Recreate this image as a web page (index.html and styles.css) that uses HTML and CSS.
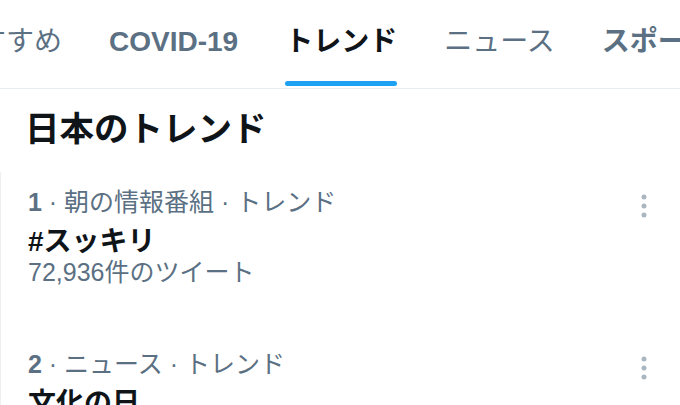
FILE: index.html
```html
<!DOCTYPE html>
<html lang="ja">
<head>
<meta charset="utf-8">
<title>トレンド</title>
<link rel="stylesheet" href="styles.css">
</head>
<body>
<div class="page">
  <nav class="tabs">
    <div class="tab-track">
      <a class="tab tab-light"><span class="tab-label">おすすめ</span><span class="tab-bar"></span></a>
      <a class="tab"><span class="tab-label">COVID-19</span><span class="tab-bar"></span></a>
      <a class="tab tab-active"><span class="tab-label">トレンド</span><span class="tab-bar"></span></a>
      <a class="tab tab-light"><span class="tab-label">ニュース</span><span class="tab-bar"></span></a>
      <a class="tab"><span class="tab-label">スポーツ</span><span class="tab-bar"></span></a>
    </div>
  </nav>
  <h2 class="section-title">日本のトレンド</h2>
  <ul class="trends">
    <li class="trend">
      <div class="trend-body">
        <div class="trend-meta"><span class="rank">1</span> · 朝の情報番組 · トレンド</div>
        <div class="trend-name">#スッキリ</div>
        <div class="trend-count">72,936件のツイート</div>
      </div>
      <button class="more" type="button" aria-label="その他">
        <svg width="24" height="44" viewBox="0 0 24 44"><circle cx="12" cy="13" r="2.5"/><circle cx="12" cy="22" r="2.5"/><circle cx="12" cy="31" r="2.5"/></svg>
      </button>
    </li>
    <li class="trend">
      <div class="trend-body">
        <div class="trend-meta"><span class="rank">2</span> · ニュース · トレンド</div>
        <div class="trend-name">文化の日</div>
      </div>
      <button class="more" type="button" aria-label="その他">
        <svg width="24" height="44" viewBox="0 0 24 44"><circle cx="12" cy="13" r="2.5"/><circle cx="12" cy="22" r="2.5"/><circle cx="12" cy="31" r="2.5"/></svg>
      </button>
    </li>
  </ul>
</div>
</body>
</html>
```

FILE: styles.css
```css
html, body {
  margin: 0;
  padding: 0;
  background: #ffffff;
}

body {
  width: 680px;
  height: 405px;
  overflow: hidden;
  font-family: "Liberation Sans", "Noto Sans CJK JP", sans-serif;
  color: #0f1419;
}

.page {
  width: 680px;
}

.tabs {
  height: 88px;
  overflow: hidden;
  border-bottom: 1px solid #e6ecf0;
}

.tab-track {
  display: flex;
  gap: 47px;
  margin-left: -50px;
}

.tab {
  display: flex;
  flex-direction: column;
  flex: none;
  padding-top: 24px;
  font-size: 28px;
  font-weight: 700;
  color: #5b7083;
}

.tab-light {
  font-weight: 400;
}

.tab-label {
  line-height: 36px;
  white-space: nowrap;
}

.tab-bar {
  height: 5px;
  margin-top: 21px;
  border-radius: 3px;
  background: transparent;
}

.tab-active {
  color: #0f1419;
}

.tab-active .tab-bar {
  background: #1da1f2;
}

.section-title {
  margin: 0;
  padding: 18px 25px 21px;
  font-size: 34.5px;
  line-height: 44px;
  font-weight: 700;
  color: #0f1419;
}

.trends {
  margin: 0;
  padding: 0;
  list-style: none;
  border-left: 1px solid #edf0f2;
}

.trend {
  display: flex;
  box-sizing: border-box;
  height: 162px;
  padding: 12px 24px 0 27px;
}

.trend-body {
  flex: 1;
  min-width: 0;
}

.trend-meta {
  font-size: 25px;
  line-height: 36px;
  color: #5b7083;
  white-space: nowrap;
}

.rank {
  font-weight: 700;
}

.trend-name {
  font-size: 28px;
  line-height: 44px;
  font-weight: 700;
  color: #0f1419;
  white-space: nowrap;
}

.trend-count {
  font-size: 25px;
  line-height: 16px;
  color: #5b7083;
  white-space: nowrap;
}

.more {
  flex: none;
  width: 24px;
  height: 44px;
  padding: 0;
  border: 0;
  background: none;
  fill: #aab6c0;
}

.more svg {
  display: block;
}
```
